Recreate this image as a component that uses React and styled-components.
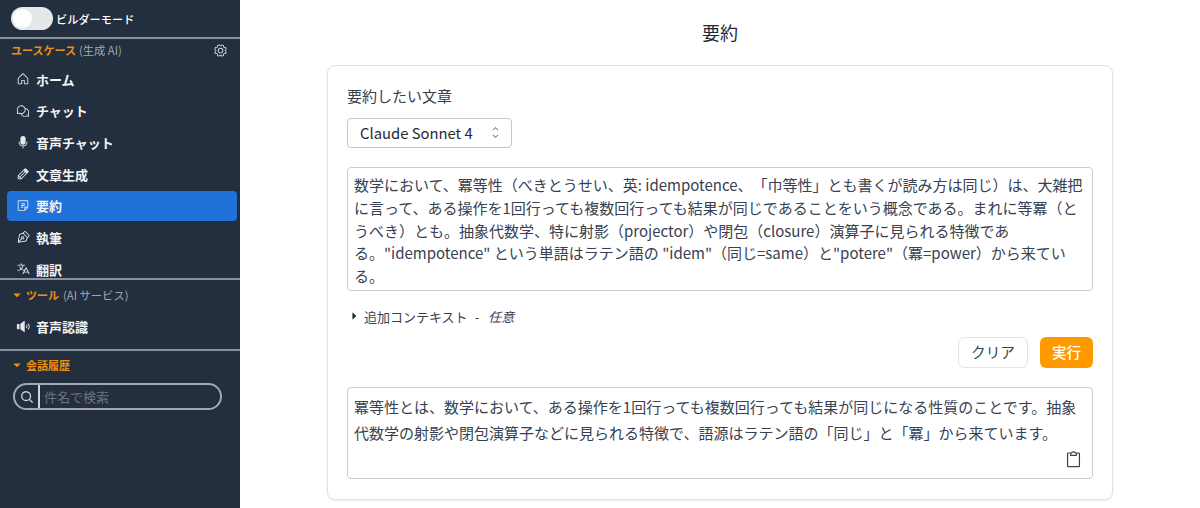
import React from 'react'
import styled, { createGlobalStyle } from 'styled-components'
import {
  PiHouse, PiChatsCircle, PiMicrophoneFill, PiPencilFill, PiNote, PiPenNib, PiTranslate,
  PiSpeakerHighFill, PiMagnifyingGlassBold, PiGear, PiClipboard, PiCaretUpDown, PiCaretDownFill, PiCaretRightFill,
} from 'react-icons/pi'

const GlobalStyle = createGlobalStyle`
  html, body { margin: 0; padding: 0; height: 100%; background: #fff; }
  body {
    font-family: "Noto Sans CJK JP", "Noto Sans", sans-serif;
    color: #1f2937;
    overflow: hidden;
    text-spacing-trim: space-all;
  }
  * { box-sizing: border-box; }
`

const Page = styled.div`
  display: flex;
  width: 1200px;
  height: 508px;
  overflow: hidden;
`
const Sidebar = styled.aside`
  width: 240px;
  flex: none;
  background: #232f3e;
  color: #fff;
  display: flex;
  flex-direction: column;
`
const BuilderRow = styled.div`
  height: 37px;
  flex: none;
  display: flex;
  align-items: center;
  gap: 3px;
  padding: 0 0 0 11px;
  font-size: 11.2px;
  font-weight: 500;
`
const Toggle = styled.div`
  width: 42px;
  height: 23px;
  border-radius: 12px;
  background: #e5e7eb;
  padding: 2px;
  display: flex;
`
const Knob = styled.div`
  width: 19px;
  height: 19px;
  border-radius: 50%;
  background: #fff;
`
const Divider = styled.div`
  height: 2px;
  flex: none;
  background: #8a919b;
`
const SectionHead = styled.div`
  display: flex;
  align-items: center;
  justify-content: space-between;
  height: 22px;
  padding: 0 12px 0 11px;
  font-size: 11px;
  flex: none;
`
const HeadLabel = styled.div`
  display: flex;
  align-items: center;
  gap: 3px;
`
const Orange = styled.span`
  color: #ec8f13;
  font-weight: 700;
  font-size: 11px;
`
const Muted = styled.span`
  color: #a2a8b0;
  font-size: 11.3px;
`
const NavScroll = styled.div`
  height: 217px;
  flex: none;
  overflow: hidden;
  padding: 3px 3px 0 7px;
  display: flex;
  flex-direction: column;
  gap: 1.7px;
`
const NavItem = styled.div`
  height: 30px;
  flex: none;
  display: flex;
  align-items: center;
  gap: 6px;
  padding-left: 9px;
  font-size: 13px;
  font-weight: 700;
  color: #f3f4f6;
  border-radius: 4px;
  background: ${p => (p.$active ? '#1f72d8' : 'transparent')};
`
const NavIcon = styled.span`
  width: 14px;
  height: 14px;
  flex: none;
  display: flex;
  align-items: center;
  justify-content: center;
  color: #e5e7eb;
  font-size: ${p => p.$size || 14}px;
`
const ToolSection = styled.div`
  height: 69px;
  flex: none;
  display: flex;
  flex-direction: column;
  gap: 5px;
  padding: 4px 3px 0 7px;
`
const ToolHead = styled.div`
  height: 22px;
  display: flex;
  align-items: center;
  gap: 4px;
  padding-left: 5px;
  svg { color: #ec8f13; font-size: 10px; }
`
const HistoryHead = styled(ToolHead)`
  padding: 0 0 0 12px;
  margin-top: 3px;
`
const SearchBox = styled.div`
  margin: 7px 0 0 13px;
  width: 209px;
  height: 27px;
  border: 2px solid #a4a9b0;
  border-radius: 14px;
  display: flex;
  align-items: stretch;
`
const SearchIcon = styled.div`
  width: 25px;
  border-right: 2px solid #d1d5db;
  display: flex;
  align-items: center;
  justify-content: center;
  color: #d1d5db;
  font-size: 14px;
`
const SearchText = styled.div`
  padding-left: 4px;
  font-size: 13px;
  line-height: 23px;
  color: #6b7280;
`
const Main = styled.main`
  flex: 1;
  display: flex;
  flex-direction: column;
  align-items: center;
`
const Title = styled.h1`
  margin: 19px 0 19px;
  font-size: 18px;
  line-height: 27px;
  font-weight: 400;
  color: #1f2937;
`
const Card = styled.section`
  width: 786px;
  height: 435px;
  flex: none;
  border: 1px solid #dfe1e5;
  border-radius: 8px;
  box-shadow: 0 1px 2px rgba(0, 0, 0, 0.08);
  padding: 19px;
  display: flex;
  flex-direction: column;
`
const Label = styled.div`
  font-size: 15px;
  line-height: 22px;
  color: #374151;
`
const Select = styled.div`
  margin-top: 11px;
  width: 165px;
  height: 30px;
  border: 1px solid #c4c7cc;
  border-radius: 4px;
  display: flex;
  align-items: center;
  justify-content: space-between;
  padding: 0 9px 2px 12px;
  font-size: 14.8px;
  color: #1f2937;
  svg { font-size: 13px; color: #6b7280; }
`
const Area = styled.div`
  position: relative;
  margin-top: ${p => p.$top}px;
  height: ${p => p.$height}px;
  flex: none;
  border: 1px solid #c9ccd1;
  border-radius: 4px;
  padding: ${p => p.$pad}px 6px 0;
  font-size: 15px;
  line-height: ${p => p.$line}px;
  color: #374151;
  white-space: nowrap;
`
const Details = styled.div`
  margin-top: 15px;
  height: 20px;
  display: flex;
  align-items: center;
  gap: 5px;
  padding-left: 2px;
  font-size: 13px;
  color: #374151;
  svg { font-size: 10px; color: #1f2937; }
`
const Dash = styled.span`
  margin: 0 4px 0 2px;
`
const Actions = styled.div`
  margin-top: 11px;
  display: flex;
  justify-content: flex-end;
  gap: 12px;
`
const Clear = styled.button`
  width: 70px;
  height: 31px;
  background: #fff;
  border: 1px solid #e1e3e6;
  border-radius: 6px;
  font: inherit;
  font-size: 14.6px;
  color: #374151;
  padding: 0 0 2px;
`
const Run = styled.button`
  width: 53px;
  height: 31px;
  background: #ff9900;
  border: 0;
  border-radius: 6px;
  font: inherit;
  font-size: 14.6px;
  font-weight: 500;
  color: #fff;
  padding: 0 0 2px;
`
const CopyBtn = styled.div`
  position: absolute;
  right: 9px;
  bottom: 9px;
  font-size: 19px;
  line-height: 0;
  color: #374151;
`

const nav = [
  [PiHouse, 'ホーム'],
  [PiChatsCircle, 'チャット'],
  [PiMicrophoneFill, '音声チャット', 16],
  [PiPencilFill, '文章生成', 16],
  [PiNote, '要約', 15, true],
  [PiPenNib, '執筆', 15],
  [PiTranslate, '翻訳'],
]

const App = () => {
  return (
    <Page>
      <GlobalStyle />
      <Sidebar>
        <BuilderRow>
          <Toggle><Knob /></Toggle>
          ビルダーモード
        </BuilderRow>
        <Divider />
        <SectionHead>
          <HeadLabel><Orange>ユースケース</Orange><Muted>(生成 AI)</Muted></HeadLabel>
          <PiGear size={15} color="#d1d5db" />
        </SectionHead>
        <NavScroll>
          {nav.map(([Icon, label, size, active]) => (
            <NavItem key={label} $active={active}>
              <NavIcon $size={size}><Icon /></NavIcon>
              {label}
            </NavItem>
          ))}
        </NavScroll>
        <Divider />
        <ToolSection>
          <ToolHead>
            <PiCaretDownFill />
            <Orange>ツール</Orange><Muted>(AI サービス)</Muted>
          </ToolHead>
          <NavItem>
            <NavIcon $size={15}><PiSpeakerHighFill /></NavIcon>
            音声認識
          </NavItem>
        </ToolSection>
        <Divider />
        <HistoryHead>
          <PiCaretDownFill />
          <Orange>会話履歴</Orange>
        </HistoryHead>
        <SearchBox>
          <SearchIcon><PiMagnifyingGlassBold /></SearchIcon>
          <SearchText>件名で検索</SearchText>
        </SearchBox>
      </Sidebar>
      <Main>
        <Title>要約</Title>
        <Card>
          <Label>要約したい文章</Label>
          <Select>Claude Sonnet 4<PiCaretUpDown /></Select>
          <Area $top={19} $height={124} $pad={6} $line={22.8}>
            数学において、冪等性（べきとうせい、英: idempotence、「巾等性」とも書くが読み方は同じ）は、大雑把<br />
            に言って、ある操作を1回行っても複数回行っても結果が同じであることをいう概念である。まれに等冪（と<br />
            うべき）とも。抽象代数学、特に射影（projector）や閉包（closure）演算子に見られる特徴であ<br />
            る。"idempotence" という単語はラテン語の "idem"（同じ=same）と"potere"（冪=power）から来てい<br />
            る。
          </Area>
          <Details><PiCaretRightFill />追加コンテキスト<Dash>-</Dash><em>任意</em></Details>
          <Actions>
            <Clear>クリア</Clear>
            <Run>実行</Run>
          </Actions>
          <Area $top={19} $height={92} $pad={6} $line={26}>
            冪等性とは、数学において、ある操作を1回行っても複数回行っても結果が同じになる性質のことです。抽象<br />
            代数学の射影や閉包演算子などに見られる特徴で、語源はラテン語の「同じ」と「冪」から来ています。
            <CopyBtn><PiClipboard /></CopyBtn>
          </Area>
        </Card>
      </Main>
    </Page>
  )
}

export default App
